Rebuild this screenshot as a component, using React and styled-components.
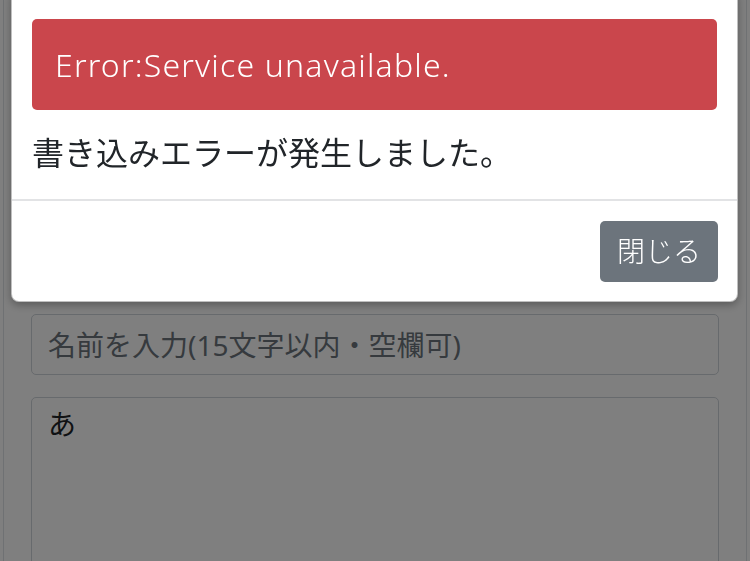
import React from "react";
import styled, { createGlobalStyle } from "styled-components";

const Global = createGlobalStyle`
  html, body { margin: 0; padding: 0; background: #fff; overflow: hidden; height: 561px; }
  body { font-family: "Noto Sans", "Noto Sans CJK JP", sans-serif; color: #212529; }
  * { box-sizing: border-box; }
`;

const Page = styled.div`
  margin-left: 3px;
  width: 744px;
  height: 561px;
  overflow: hidden;
  border-left: 1px solid #dee2e6;
  border-right: 1px solid #dee2e6;
  padding: 314px 27px 0;
  display: flex;
  flex-direction: column;
  gap: 22px;
`;

const NameInput = styled.input`
  flex-shrink: 0;
  height: 61px;
  width: 100%;
  border: 1px solid #ced4da;
  border-radius: 5px;
  padding: 0 16px;
  font-family: inherit;
  font-size: 28px;
  color: #212529;
  background: #fff;
  &::placeholder { color: #6c757d; opacity: 1; }
`;

const Message = styled.textarea`
  flex-shrink: 0;
  height: 220px;
  width: 100%;
  border: 1px solid #ced4da;
  border-radius: 5px;
  padding: 5px 16px;
  font-family: inherit;
  font-size: 28px;
  line-height: 1.5;
  color: #212529;
  background: #fff;
  resize: none;
`;

const Backdrop = styled.div`
  position: fixed;
  inset: 0;
  background: rgba(0, 0, 0, 0.5);
`;

const Modal = styled.div`
  position: fixed;
  top: -10px;
  left: 11px;
  width: 727px;
  background: #fff;
  border: 1px solid rgba(0, 0, 0, 0.25);
  border-radius: 8px;
  box-shadow: 0 3px 8px rgba(0, 0, 0, 0.3);
  display: flex;
  flex-direction: column;
`;

const ModalBody = styled.div`
  padding: 28px 20px 22px;
  display: flex;
  flex-direction: column;
  gap: 19px;
`;

const Alert = styled.div`
  background: #ca464c;
  color: #fff;
  border-radius: 5px;
  padding: 21px 23px;
  font-size: 32px;
  line-height: 49px;
  font-weight: 300;
  letter-spacing: 1.2px;
`;

const BodyText = styled.p`
  margin: 0;
  font-size: 32px;
  line-height: 48px;
  font-weight: 400;
`;

const ModalFooter = styled.div`
  border-top: 2px solid #e2e3e5;
  padding: 20px 19px 19px;
  display: flex;
  justify-content: flex-end;
`;

const CloseButton = styled.button`
  height: 61px;
  padding: 0 17px;
  border: none;
  border-radius: 5px;
  background: #6c747c;
  color: #fff;
  font-family: inherit;
  font-size: 28px;
  font-weight: 300;
  line-height: 61px;
`;

export default function App() {
  return (
    <>
      <Global />
      <Page>
        <NameInput placeholder="名前を入力(15文字以内・空欄可)" />
        <Message defaultValue="あ" />
      </Page>
      <Backdrop />
      <Modal>
        <ModalBody>
          <Alert>Error:Service unavailable.</Alert>
          <BodyText>書き込みエラーが発生しました。</BodyText>
        </ModalBody>
        <ModalFooter>
          <CloseButton>閉じる</CloseButton>
        </ModalFooter>
      </Modal>
    </>
  );
}
